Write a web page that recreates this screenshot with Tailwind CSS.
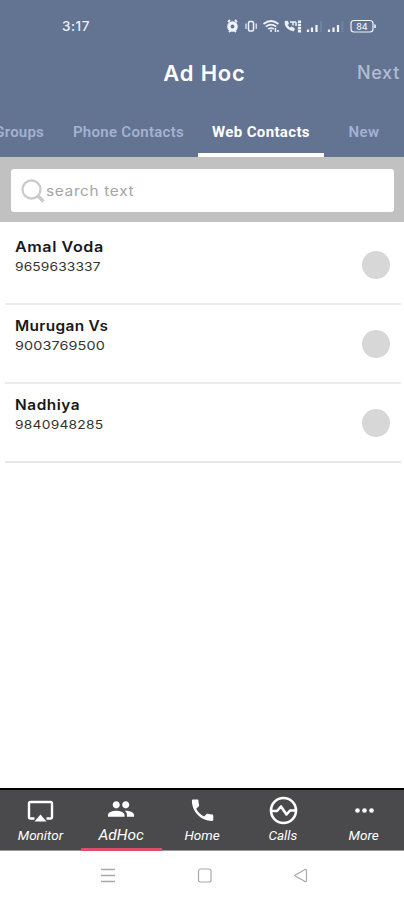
<!DOCTYPE html>
<html lang="en">

<head>
  <meta charset="UTF-8">
  <meta name="viewport" content="width=device-width, initial-scale=1.0">
  <title>Ad Hoc</title>
  <script src="https://cdn.jsdelivr.net/npm/@tailwindcss/browser@4"></script>
</head>

<body class="bg-white font-['Inter',sans-serif]">
  <div class="flex flex-col w-[404px] h-[900px] overflow-hidden">

    <header class="flex flex-col h-[157px] shrink-0 bg-[#637392] text-white">
      <!-- Status bar -->
      <div class="flex items-center justify-between h-[52px] pl-[62px] pr-[28px] text-[#eef2fb]">
        <span class="text-[13.500px] font-medium tracking-[0.5px]">3:17</span>
        <svg class="w-[150px] h-4" viewBox="226 18 150 16" fill="none" stroke="currentColor">
          <circle cx="232.500" cy="26.500" r="3.600" stroke-width="3.400" />
          <path d="M228 22l2-2M237 22l-2-2M229 32l1.500-1.500M236 32l-1.500-1.500" stroke-width="1.800" />
          <rect x="248.500" y="21.500" width="5" height="9.500" rx="1.500" stroke-width="1.500" />
          <path d="M246 23.500v5.500M256.200 23.500v5.500" stroke-width="1.200" />
          <path d="M263.500 24q7.500-6 15 0M265.800 26.600q5.200-4 10.400 0M268.200 29q2.800-2 5.600 0" stroke-width="1.700" />
          <path d="M271 29.500v2.500M275.500 28v4M278 30v2" stroke-width="1.500" />
          <path d="M285 21.500q-.5 7.500 8.500 9.500l1-2.500-3-1.500-1.500 1q-2-1.500-2.500-3l1-1.500-1-2.500z" fill="currentColor" stroke-width=".8" />
          <path d="M290 22h6M293 22v3.500M296 22v4" stroke-width="1.500" />
          <path d="M299.500 20.500v12" stroke-width="3.200" stroke-dasharray="2.600 .6" />
          <path d="M308 29.500v2.500M312 27.500v4.500M316.500 25v7M329 29.500v2.500M333.500 27.500v4.500M338 25v7" stroke-width="2.200" />
          <path d="M321 21v11M342.500 21v11" stroke-width="2" opacity=".1" />
          <rect x="351" y="20.500" width="22" height="11.500" rx="3" stroke-width="1.200" />
          <path d="M375 24.500v3.500" stroke-width="1.600" />
          <text x="362" y="29.500" text-anchor="middle" font-size="9" font-weight="500" fill="currentColor" stroke="none">84</text>
        </svg>
      </div>

      <!-- Title -->
      <div class="grid grid-cols-[100px_1fr_100px] items-center h-[42px]">
        <h1 class="col-start-2 pl-[5px] text-center text-[22px] font-semibold tracking-[0.8px]">Ad Hoc</h1>
        <button class="text-right pr-[4px] pb-[2px] text-[18px] font-medium tracking-[0.7px] text-[#b1bcd4]">Next</button>
      </div>

      <!-- Tabs -->
      <nav class="flex flex-1 text-[15px] font-['Roboto',sans-serif] font-semibold leading-[18px] text-[#a4b2d0] whitespace-nowrap">
        <a class="flex w-[58px] justify-end pr-[14px] pt-[29px] tracking-[0.2px]">Groups</a>
        <a class="flex w-[140px] justify-center pl-[1px] pt-[29px] tracking-[0.3px]">Phone Contacts</a>
        <a class="flex w-[126px] justify-center pt-[29px] border-b-4 border-white text-white font-bold tracking-[0.35px]">Web Contacts</a>
        <a class="flex w-[80px] justify-center pt-[29px] tracking-[0.4px]">New</a>
      </nav>
    </header>

    <!-- Search -->
    <div class="h-[65px] shrink-0 bg-[#c1c1c1] px-[11px] pt-[12px] pr-[10px]">
      <div class="flex items-center h-[43px] rounded-[3px] bg-white pl-[9px]">
        <svg class="w-[26px] h-[26px] text-[#cbcbcb]" viewBox="0 0 26 26" fill="none" stroke="currentColor">
          <circle cx="11.500" cy="11.500" r="9" stroke-width="2.300" />
          <path d="M18 18l5.500 5.500" stroke-width="3.500" />
        </svg>
        <span class="inline-block origin-left scale-x-110 text-[14px] tracking-[0.6px] text-[#a5a5a5]">search text</span>
      </div>
    </div>

    <ul class="flex-1 pl-[5px] pr-[3px]">
      <li class="flex justify-between h-[83px] border-b-2 border-[#ececec] pl-[10px] pr-[11px] pt-[16px]">
        <div>
          <p class="origin-left scale-x-115 text-[14px] leading-[18px] font-semibold tracking-[0.5px] text-[#181818]">Amal Voda</p>
          <p class="origin-left scale-x-115 pt-[3px] text-[12px] leading-[16px] tracking-[0.1px] text-[#333]">9659633337</p>
        </div>
        <span class="mt-[13px] size-[28px] rounded-full bg-[#d7d7d7]"></span>
      </li>
      <li class="flex justify-between h-[79px] border-b-2 border-[#ececec] pl-[10px] pr-[11px] pt-[12px]">
        <div>
          <p class="origin-left scale-x-110 text-[14px] leading-[18px] font-semibold tracking-[0.3px] text-[#181818]">Murugan Vs</p>
          <p class="origin-left scale-x-120 pt-[3px] text-[12px] leading-[16px] tracking-[0.1px] text-[#333]">9003769500</p>
        </div>
        <span class="mt-[13px] size-[28px] rounded-full bg-[#d7d7d7]"></span>
      </li>
      <li class="flex justify-between h-[79px] border-b-2 border-[#e6e6e6] pl-[10px] pr-[11px] pt-[12px]">
        <div>
          <p class="origin-left scale-x-110 text-[14px] leading-[18px] font-semibold tracking-[0.5px] text-[#181818]">Nadhiya</p>
          <p class="origin-left scale-x-115 pt-[3px] text-[12px] leading-[16px] tracking-[0.2px] text-[#333]">9840948285</p>
        </div>
        <span class="mt-[13px] size-[28px] rounded-full bg-[#d7d7d7]"></span>
      </li>
    </ul>

    <!-- Bottom tabs -->
    <nav class="grid grid-cols-5 h-[63px] shrink-0 border-t-2 border-black bg-[#4a4a4c] font-['Roboto',sans-serif] text-[13.500px] leading-[16px] italic text-white">
      <a class="flex flex-col items-center pt-[6px] border-b border-[#999]">
        <svg class="size-[32px]" viewBox="-.500 0 32 32" fill="none" stroke="currentColor">
          <path d="M10 22.500H6a1.500 1.500 0 0 1-1.500-1.500V7.500A1.500 1.500 0 0 1 6 6h20a1.500 1.500 0 0 1 1.500 1.500V21a1.500 1.500 0 0 1-1.500 1.500h-4" stroke-width="2.400" />
          <path d="M16 18.500l6 7H10z" fill="currentColor" stroke="none" />
        </svg>
        <span class="-mt-px">Monitor</span>
      </a>
      <a class="flex flex-col items-center pt-[5px] border-b-3 border-[#dc4e6c] text-[15.500px]">
        <svg class="size-[32px]" viewBox="-1.500 -.300 27 27" fill="currentColor">
          <path d="M16 11c1.660 0 2.990-1.340 2.990-3S17.660 5 16 5s-3 1.340-3 3 1.340 3 3 3zm-8 0c1.660 0 2.990-1.340 2.990-3S9.660 5 8 5 5 6.340 5 8s1.340 3 3 3zm0 2c-2.330 0-7 1.170-7 3.500V18h14v-1.500c0-2.330-4.670-3.500-7-3.500zm8 0c-.290 0-.620.020-.970.050 1.160.840 1.970 1.970 1.970 3.450V18h6v-1.500c0-2.330-4.670-3.500-7-3.500z" />
        </svg>
        <span>AdHoc</span>
      </a>
      <a class="flex flex-col items-center pt-[6px] border-b border-[#999]">
        <svg class="size-[32px]" viewBox="-2 0 27 27" fill="currentColor">
          <path d="M6.620 10.790c1.440 2.830 3.760 5.140 6.590 6.590l2.200-2.200c.270-.270.670-.360 1.020-.240 1.120.370 2.330.570 3.570.570.550 0 1 .450 1 1V20c0 .550-.450 1-1 1-9.390 0-17-7.610-17-17 0-.550.450-1 1-1h3.500c.550 0 1 .450 1 1 0 1.250.200 2.450.570 3.570.110.350.030.740-.250 1.020l-2.200 2.200z" />
        </svg>
        <span class="-mt-px">Home</span>
      </a>
      <a class="flex flex-col items-center pt-[6px] border-b border-[#999]">
        <svg class="size-[32px]" viewBox="-.500 .500 32 32" fill="none" stroke="currentColor">
          <circle cx="16" cy="15" r="12.500" stroke-width="2.600" />
          <path d="M4 15.500h5.500l4-4.500 5.500 8 3.500-4H28" stroke-width="2.600" stroke-linejoin="round" />
        </svg>
        <span class="-mt-px">Calls</span>
      </a>
      <a class="flex flex-col items-center pt-[6px] border-b border-[#999]">
        <svg class="size-[32px]" viewBox="-.500 .500 32 32" fill="currentColor">
          <circle cx="9" cy="15" r="2.300" />
          <circle cx="16" cy="15" r="2.300" />
          <circle cx="23" cy="15" r="2.300" />
        </svg>
        <span class="-mt-px">More</span>
      </a>
    </nav>

    <!-- System navigation -->
    <div class="flex items-center justify-between h-[49px] shrink-0 pb-[2px] pl-[100px] pr-[95px] text-[#a9a9a9]">
      <svg class="size-[16px]" viewBox="0 0 16 16" fill="none" stroke="currentColor" stroke-width="1.300">
        <path d="M1 2.500h14M1 8.500h14M1 14.500h14" />
      </svg>
      <svg class="size-[16px]" viewBox="0 0 16 16" fill="none" stroke="currentColor" stroke-width="1.200">
        <rect x="1.500" y="2" width="12.500" height="13" rx="2" />
      </svg>
      <svg class="size-[16px]" viewBox="0 0 16 16" fill="none" stroke="currentColor" stroke-width="1.200" stroke-linejoin="round">
        <path d="M1.500 8.500l10.500-6q1.500-.5 1.500 1v10q0 1.500-1.500 1z" />
      </svg>
    </div>
  </div>
</body>

</html>
